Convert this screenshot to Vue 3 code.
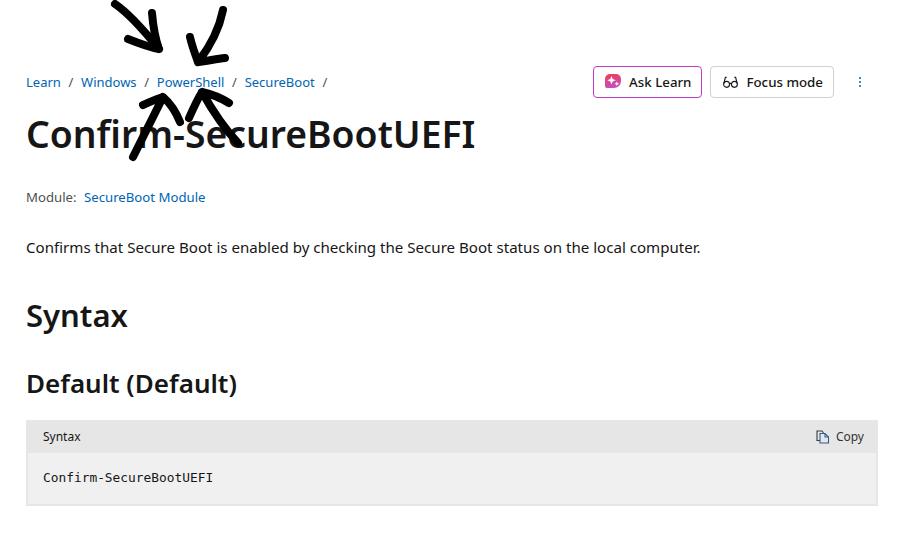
<script setup>
const crumbs = ['Learn', 'Windows', 'PowerShell', 'SecureBoot']
</script>

<template>
  <div class="page">
    <div class="topbar">
      <nav class="crumbs">
        <template v-for="c in crumbs" :key="c">
          <a class="link">{{ c }}</a><span class="sep">/</span>
        </template>
      </nav>
      <div class="actions">
        <button class="btn ask">
          <svg width="18" height="18" viewBox="0 0 18 18">
            <defs>
              <linearGradient id="g" x1="0.2" y1="0" x2="0.5" y2="1">
                <stop offset="0" stop-color="#ee3f55" />
                <stop offset="1" stop-color="#c44fc4" />
              </linearGradient>
            </defs>
            <path d="M6 1h6a5 5 0 0 1 5 5v2a7 7 0 0 1-7 7H3a2 2 0 0 1-2-2V6a5 5 0 0 1 5-5z" fill="url(#g)" />
            <path d="M7.500 3l1.200 3 3 1.200-3 1.200-1.200 3-1.200-3-3-1.200 3-1.200zM12.800 8.500l.7 1.600 1.600.7-1.600.7-.7 1.600-.7-1.600-1.600-.7 1.600-.7z" fill="#fff" />
          </svg>
          Ask Learn
        </button>
        <button class="btn focus">
          <svg width="15" height="13" viewBox="0 0 16 14" fill="none" stroke="#161616" stroke-width="1.200">
            <circle cx="3.800" cy="9" r="3.200" />
            <circle cx="12.200" cy="9" r="3.200" />
            <path d="M7 8.500c.6-.6 1.400-.6 2 0M.8 8l1.700-6.500h1.300M15.200 8l-1.700-6.500h-1.300" />
          </svg>
          Focus mode
        </button>
        <span class="more"><i></i><i></i><i></i></span>
      </div>
    </div>

    <h1>Confirm-SecureBootUEFI</h1>
    <p class="module">Module: <a class="link">SecureBoot Module</a></p>
    <p class="summary">Confirms that Secure Boot is enabled by checking the Secure Boot status on the local computer.</p>
    <h2>Syntax</h2>
    <h3>Default (Default)</h3>

    <section class="code">
      <header>
        <span>Syntax</span>
        <span class="copy">
          <svg width="14" height="14" viewBox="0 0 14 14" fill="none" stroke-width="1.100">
            <path d="M4 10.500H1V1h5l1.500 2" stroke="#3a3a3a" />
            <path d="M4 3.500h5l3.500 3.500v6H4z" stroke="#2a5f96" />
            <path d="M9 3.500V7h3.500" stroke="#2a5f96" />
          </svg>
          Copy
        </span>
      </header>
      <pre>Confirm-SecureBootUEFI</pre>
    </section>

    <svg class="scribble" width="917" height="170" viewBox="0 0 917 170" fill="none" stroke="#000" stroke-width="8" stroke-linecap="round" stroke-linejoin="round">
      <path d="M115 4C130 14 146 33 159 49M152 13c1 12 3 25 7 36M128 39c10 4 20 8 31 10" />
      <path d="M223 10c-4 20-14 38-25 52M190 37c2 9 5 17 8 25M225 58c-9 1-18 3-27 4" />
      <path d="M133 157c10-20 20-40 30-60M143 105c7-3 13-6 20-8 7 6 13 15 17 25" />
      <path d="M238 143c-14-15-26-33-36-51M189 118c4-9 8-18 13-26 9 2 19 6 27 11" />
    </svg>
  </div>
</template>

<style scoped>
.page {
  position: relative;
  width: 917px;
  height: 546px;
  overflow: hidden;
  box-sizing: border-box;
  padding: 66px 39px 0 26px;
  font-family: "Noto Sans", "Open Sans", sans-serif;
  color: #161616;
  background: #fff;
}
.topbar {
  display: flex;
  justify-content: space-between;
  align-items: center;
  height: 32px;
}
.crumbs {
  display: flex;
  gap: 7.700px;
  font-size: 13px;
}
.link {
  color: #0065b3;
}
.sep {
  color: #505050;
}
.actions {
  display: flex;
  align-items: center;
  gap: 8px;
}
.btn {
  display: flex;
  align-items: center;
  gap: 7px;
  height: 32px;
  padding: 0 10px;
  box-sizing: border-box;
  background: #fff;
  border: 1px solid #d1d1d1;
  border-radius: 4px;
  font: 500 13.300px "Noto Sans", sans-serif;
  color: #161616;
}
.ask {
  border-color: #c03bc4;
}
.focus {
  padding: 0 10px 0 12px;
  gap: 8px;
}
.more {
  display: flex;
  flex-direction: column;
  align-items: center;
  gap: 2px;
  width: 36px;
}
.more i {
  width: 2px;
  height: 2px;
  background: #0065b3;
  border-radius: 50%;
}
h1 {
  margin: 10px 0 0;
  font-size: 37.300px;
  line-height: 52px;
  font-weight: 600;
}
.module {
  margin: 27px 0 0;
  font-size: 13.200px;
  line-height: 20px;
  color: #505050;
}
.module .link {
  margin-left: 4px;
}
.summary {
  margin: 29px 0 0;
  font-size: 15.100px;
  line-height: 22px;
}
h2 {
  margin: 36px 0 0;
  font-size: 31px;
  line-height: 42px;
  font-weight: 600;
}
h3 {
  margin: 30px 0 0;
  font-size: 26px;
  line-height: 34px;
  font-weight: 600;
}
.code {
  margin-top: 20px;
  border: 2px solid #e6e6e6;
  border-top: 0;
  background: #f0f0f0;
}
.code header {
  display: flex;
  justify-content: space-between;
  align-items: center;
  height: 33px;
  padding: 0 12px 0 15px;
  background: #e6e6e6;
  font-size: 12px;
}
.copy {
  display: flex;
  align-items: center;
  gap: 6px;
  color: #333;
}
pre {
  margin: 0;
  padding: 16px 15px;
  height: 51px;
  box-sizing: border-box;
  font: 12.850px/18px "DejaVu Sans Mono", monospace;
  color: #161616;
}
.scribble {
  position: absolute;
  left: 0;
  top: 0;
  pointer-events: none;
}
</style>
